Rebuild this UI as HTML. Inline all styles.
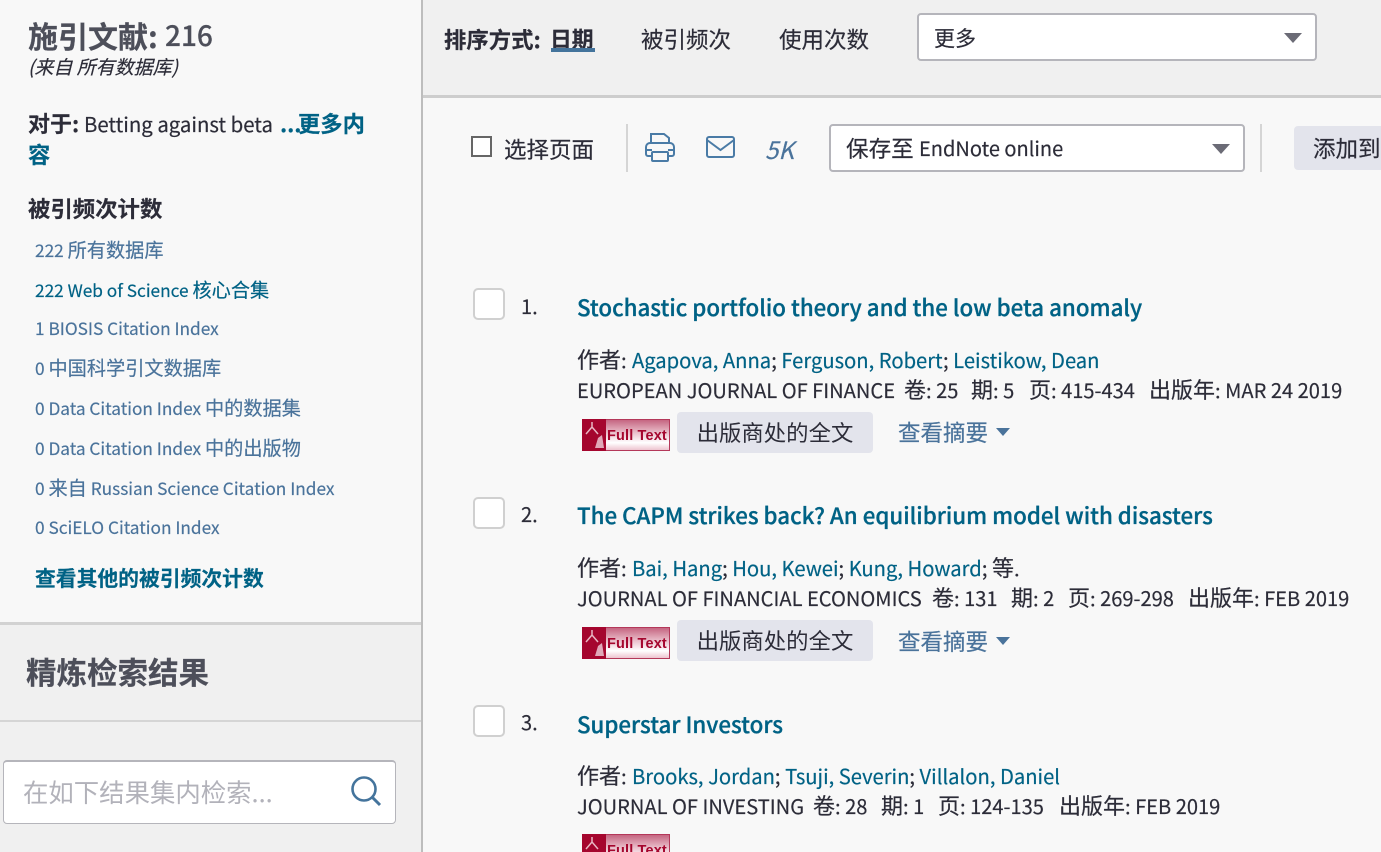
<!DOCTYPE html>
<html lang="zh"><head><meta charset="utf-8"><title>施引文献</title>
<style>
html,body{margin:0;padding:0;width:1381px;height:852px;overflow:hidden}
body{position:relative;background:#f8f8f8;font-family:"Noto Sans CJK SC","Liberation Sans",sans-serif;color:#2c2c38}
.t{position:absolute;white-space:nowrap;line-height:30px;height:30px;-webkit-text-stroke:.18px}
.b{position:absolute}
.l{color:#006285}
.m{color:#4a739b}
.c{font-size:17.25px}
.c .z{font-size:19.2px}
.z{line-height:1}
.a{font-size:20.2px}
.a .z{font-size:22px}
.j{font-size:20.08px}
.j .z{font-size:22px}
.h{font-size:22.3px;font-weight:500;-webkit-text-stroke:.3px}
b{font-weight:700}
.box{position:absolute;box-sizing:border-box;background:#fff;border:2px solid #b5b5bb;border-radius:4px}
.ck{position:absolute;box-sizing:border-box;width:32px;height:32px;background:#fff;border:2px solid #d0d0d0;border-radius:5px;left:473px}
.tri{position:absolute;width:0;height:0;border-left:9px solid transparent;border-right:9px solid transparent;border-top:10px solid #6b6b76}
.trib{position:absolute;width:0;height:0;border-left:7px solid transparent;border-right:7px solid transparent;border-top:8px solid #4a739b}
.btn{position:absolute;background:#e3e4ec;border-radius:4px;left:677px;width:196px;height:41px;text-align:center;line-height:40px;font-size:22.4px;color:#2c2c38}
.ft{position:absolute;left:582px;width:88px;height:32px;overflow:hidden}
.ft svg{position:absolute;left:0;top:0}
.ft span{position:absolute;left:25px;top:1px;font:700 14.5px/32px "Liberation Sans",sans-serif;letter-spacing:.15px;color:#a5062e;white-space:nowrap}
</style></head><body>
<div class="b" style="left:0;top:622px;width:421px;height:230px;background:#f0f0f0"></div>
<div class="b" style="left:0;top:622px;width:421px;height:3px;background:#d2d2d2"></div>
<div class="b" style="left:0;top:720px;width:421px;height:2px;background:#d5d5d5"></div>
<div class="b" style="left:421px;top:0;width:2px;height:852px;background:#bdbdbd"></div>
<div class="b" style="left:423px;top:0;width:958px;height:95px;background:#f0f0f0"></div>
<div class="b" style="left:423px;top:95px;width:958px;height:3px;background:#cdcdcd"></div>

<div class="t" style="left:28px;top:19px;font-size:30px;color:#4d4f5a;line-height:32px"><b>施引文献:</b></div>
<div class="t" style="left:165px;top:19px;font-size:28px;font-weight:500;color:#4d4f5a;line-height:32px">216</div>
<div class="t" style="left:28px;top:52px;font-size:19px;font-style:italic">(来自 所有数据库)</div>
<div class="t" style="left:28px;top:108px;font-size:22px"><b>对于:</b></div>
<div class="t" style="left:84px;top:108px;font-size:20.35px">Betting against beta</div>
<div class="t l" style="left:280px;top:108px;font-size:22px"><b>...</b></div>
<div class="t l" style="left:298px;top:108px;font-size:22.3px"><b>更多内</b></div>
<div class="t l" style="left:28px;top:139px;font-size:22.3px"><b>容</b></div>
<div class="t" style="left:28px;top:193px;font-size:22.4px"><b>被引频次计数</b></div>
<div class="t m c" style="left:35px;top:235px">222 <span class="z">所有数据库</span></div>
<div class="t l c" style="left:35px;top:275px">222 Web of Science <span class="z">核心合集</span></div>
<div class="t m c" style="left:35px;top:313px">1 BIOSIS Citation Index</div>
<div class="t m c" style="left:35px;top:353px">0 <span class="z">中国科学引文数据库</span></div>
<div class="t m c" style="left:35px;top:393px">0 Data Citation Index <span class="z">中的数据集</span></div>
<div class="t m c" style="left:35px;top:433px">0 Data Citation Index <span class="z">中的出版物</span></div>
<div class="t m c" style="left:35px;top:473px">0 <span class="z">来自</span> Russian Science Citation Index</div>
<div class="t m c" style="left:35px;top:512px">0 SciELO Citation Index</div>
<div class="t l" style="left:35px;top:562px;font-size:20.8px"><b>查看其他的被引频次计数</b></div>
<div class="t" style="left:26px;top:655px;font-size:30.5px;color:#4d4f5a;line-height:32px"><b>精炼检索结果</b></div>

<div class="box" style="left:3px;top:760px;width:393px;height:64px;border-width:2px 1px 1px 1px"></div>
<div class="t" style="left:23px;top:777px;font-size:25.4px;color:#b2b2ba;-webkit-text-stroke:0">在如下结果集内检索...</div>
<svg class="b" style="left:350px;top:775px" width="32" height="32" viewBox="0 0 32 32" fill="none" stroke="#44749c" stroke-width="2.6"><circle cx="14" cy="14" r="11.500"/><path d="M22.500 22.500L30 30" stroke-width="3"/></svg>

<div class="t" style="left:444px;top:24px;font-size:22.4px"><b>排序方式:</b></div>
<div class="t" style="left:550px;top:24px;font-size:21.8px"><b>日期</b></div>
<div class="b" style="left:551px;top:48px;width:44px;height:4px;background:#44749c"></div>
<div class="t" style="left:641px;top:24px;font-size:22.5px">被引频次</div>
<div class="t" style="left:779px;top:24px;font-size:22.5px">使用次数</div>
<div class="box" style="left:917px;top:13px;width:400px;height:48px"></div>
<div class="t" style="left:934px;top:23px;font-size:21px">更多</div>
<div class="tri" style="left:1284px;top:33px"></div>

<div class="b" style="left:471px;top:136px;width:21px;height:21px;box-sizing:border-box;border:2px solid #666;background:#fff"></div>
<div class="t" style="left:504px;top:134px;font-size:22.5px">选择页面</div>
<div class="b" style="left:626px;top:124px;width:2px;height:48px;background:#d5d5d5"></div>
<svg class="b" style="left:645px;top:132px" width="30" height="30" viewBox="0 0 30 30" fill="none" stroke="#4a7ba6" stroke-width="2"><path d="M6 12V2h13l5 4v6"/><path d="M6 24H3a2 2 0 0 1-2-2v-7a4 4 0 0 1 4-4h20a4 4 0 0 1 4 4v7a2 2 0 0 1-2 2h-3"/><rect x="7" y="20" width="16" height="9" rx="1"/><path d="M1 18h6M23 18h6"/></svg>
<svg class="b" style="left:705px;top:135px" width="31" height="25" viewBox="0 0 31 25" fill="none" stroke="#4a7ba6" stroke-width="2"><rect x="2" y="2" width="27" height="20" rx="2"/><path d="M2 5l13.500 10L29 5"/></svg>
<div class="t" style="left:765px;top:134px;font-size:24px;font-style:italic;color:#4a739b">5K</div>
<div class="box" style="left:829px;top:124px;width:416px;height:48px"></div>
<div class="t" style="left:846px;top:133px;font-size:22.6px">保存至</div>
<div class="t" style="left:919px;top:133px;font-size:20px">EndNote online</div>
<div class="tri" style="left:1212px;top:144px"></div>
<div class="b" style="left:1260px;top:124px;width:2px;height:48px;background:#d5d5d5"></div>
<div class="b" style="left:1294px;top:126px;width:87px;height:44px;background:#e3e4ec;border-radius:4px 0 0 4px"></div>
<div class="t" style="left:1313px;top:133px;font-size:22.5px">添加到</div>

<svg width="0" height="0" style="position:absolute"><defs><linearGradient id="g" x1="0" y1="0" x2="0" y2="1"><stop offset="0" stop-color="#c4627e"/><stop offset=".45" stop-color="#ecc4cf"/><stop offset=".75" stop-color="#fff"/><stop offset="1" stop-color="#ecc0cc"/></linearGradient></defs></svg>

<div class="ck" style="top:288px"></div>
<div class="t" style="left:521px;top:291px;font-size:20px">1.</div>
<div class="t l h" style="left:577px;top:292px">Stochastic portfolio theory and the low beta anomaly</div>
<div class="t a" style="left:577px;top:345px"><span class="z">作者</span>:</div>
<div class="t a" style="left:632px;top:345px"><span class="l">Agapova, Anna</span>; <span class="l">Ferguson, Robert</span>; <span class="l">Leistikow, Dean</span></div>
<div class="t j" style="left:577px;top:375px">EUROPEAN JOURNAL OF FINANCE</div>
<div class="t j" style="left:904px;top:375px"><span class="z">卷</span>: 25</div>
<div class="t j" style="left:971px;top:375px"><span class="z">期</span>: 5</div>
<div class="t j" style="left:1029px;top:375px"><span class="z">页</span>: 415-434</div>
<div class="t j" style="left:1149px;top:375px"><span class="z">出版年</span>: MAR 24 2019</div>
<div class="ft" style="top:419px"><svg width="88" height="32"><rect x=".5" y=".5" width="87" height="31" fill="url(#g)" stroke="#b4385a"/><rect width="24" height="32" fill="#a5062e"/><path d="M4 15l6-7 6 7M10 8V3" stroke="#e8b8c4" stroke-width="1.500" fill="none"/><path d="M13 29l3-10 4-3 2 13z" fill="#e0a8b8"/></svg><span>Full Text</span></div>
<div class="btn" style="top:412px">出版商处的全文</div>
<div class="t m" style="left:898px;top:417px;font-size:22.5px">查看摘要</div>
<div class="trib" style="left:996px;top:428px"></div>

<div class="ck" style="top:497px"></div>
<div class="t" style="left:521px;top:499px;font-size:20px">2.</div>
<div class="t l h" style="left:577px;top:500px">The CAPM strikes back? An equilibrium model with disasters</div>
<div class="t a" style="left:577px;top:553px"><span class="z">作者</span>:</div>
<div class="t a" style="left:632px;top:553px"><span class="l">Bai, Hang</span>; <span class="l">Hou, Kewei</span>; <span class="l">Kung, Howard</span>; <span class="z">等</span>.</div>
<div class="t j" style="left:577px;top:583px">JOURNAL OF FINANCIAL ECONOMICS</div>
<div class="t j" style="left:932px;top:583px"><span class="z">卷</span>: 131</div>
<div class="t j" style="left:1011px;top:583px"><span class="z">期</span>: 2</div>
<div class="t j" style="left:1068px;top:583px"><span class="z">页</span>: 269-298</div>
<div class="t j" style="left:1188px;top:583px"><span class="z">出版年</span>: FEB 2019</div>
<div class="ft" style="top:627px"><svg width="88" height="32"><rect x=".5" y=".5" width="87" height="31" fill="url(#g)" stroke="#b4385a"/><rect width="24" height="32" fill="#a5062e"/><path d="M4 15l6-7 6 7M10 8V3" stroke="#e8b8c4" stroke-width="1.500" fill="none"/><path d="M13 29l3-10 4-3 2 13z" fill="#e0a8b8"/></svg><span>Full Text</span></div>
<div class="btn" style="top:620px">出版商处的全文</div>
<div class="t m" style="left:898px;top:626px;font-size:22.5px">查看摘要</div>
<div class="trib" style="left:996px;top:637px"></div>

<div class="ck" style="top:705px"></div>
<div class="t" style="left:521px;top:707px;font-size:20px">3.</div>
<div class="t l h" style="left:577px;top:709px">Superstar Investors</div>
<div class="t a" style="left:577px;top:761px"><span class="z">作者</span>:</div>
<div class="t a" style="left:632px;top:761px"><span class="l">Brooks, Jordan</span>; <span class="l">Tsuji, Severin</span>; <span class="l">Villalon, Daniel</span></div>
<div class="t j" style="left:577px;top:791px">JOURNAL OF INVESTING</div>
<div class="t j" style="left:813px;top:791px"><span class="z">卷</span>: 28</div>
<div class="t j" style="left:881px;top:791px"><span class="z">期</span>: 1</div>
<div class="t j" style="left:938px;top:791px"><span class="z">页</span>: 124-135</div>
<div class="t j" style="left:1059px;top:791px"><span class="z">出版年</span>: FEB 2019</div>
<div class="ft" style="top:834px;height:18px"><svg width="88" height="32"><rect x=".5" y=".5" width="87" height="31" fill="url(#g)" stroke="#b4385a"/><rect width="24" height="32" fill="#a5062e"/><path d="M4 15l6-7 6 7M10 8V3" stroke="#e8b8c4" stroke-width="1.500" fill="none"/></svg><span>Full Text</span></div>
</body></html>
